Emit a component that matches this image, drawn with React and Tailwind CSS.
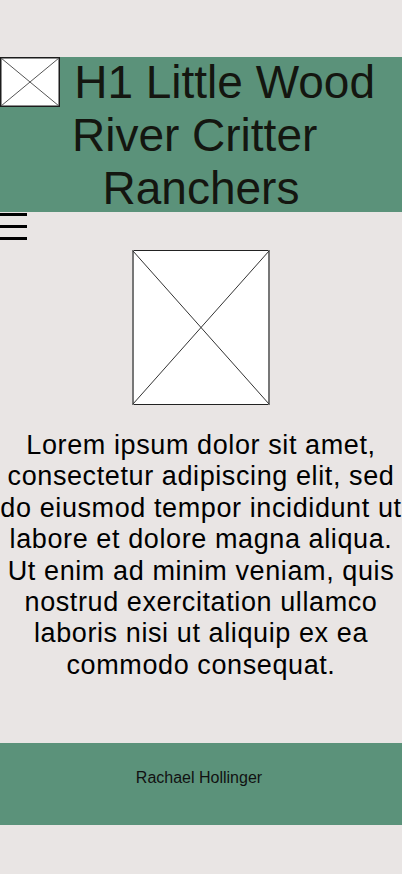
export default function App() {
  return (
    <div className="min-h-[874px] bg-[#e9e5e4] text-black" style={{ fontFamily: '"Liberation Sans", Arial, sans-serif' }}>
      <div className="h-[57px]" />
      <header className="bg-[#5b927a] h-[155px] flow-root">
        <svg className="float-left block" width="60" height="50" viewBox="0 0 60 50">
          <rect x="0.75" y="0.75" width="58.5" height="48.5" fill="#fff" stroke="#1c1c1c" strokeWidth="1.5" />
          <line x1="1" y1="1" x2="59" y2="49" stroke="#555" strokeWidth="1" />
          <line x1="59" y1="1" x2="1" y2="49" stroke="#555" strokeWidth="1" />
        </svg>
        <h1 className="text-center text-[46px] leading-[53px] font-normal text-[#141610] -mt-[1px]">
          H1 Little Wood{"\u00a0"}<br />River Critter{"\u00a0"}<br />Ranchers
        </h1>
      </header>
      <nav className="h-[30px] pt-px flex flex-col gap-[9px]">
        <div className="w-[27px] h-[3px] bg-black" />
        <div className="w-[27px] h-[3px] bg-black" />
        <div className="w-[27px] h-[3px] bg-black" />
      </nav>
      <div className="flex justify-center pt-[8px]">
        <svg className="block" width="138" height="155" viewBox="0 0 138 155">
          <rect x="0" y="0" width="138" height="155" fill="#fff" />
          <line x1="1" y1="0.5" x2="137" y2="0.5" stroke="#222" strokeWidth="1" />
          <line x1="1" y1="154.5" x2="137" y2="154.5" stroke="#222" strokeWidth="1" />
          <line x1="1" y1="0" x2="1" y2="155" stroke="#777" strokeWidth="2" />
          <line x1="137" y1="0" x2="137" y2="155" stroke="#777" strokeWidth="2" />
          <line x1="1" y1="1" x2="137" y2="154" stroke="#333" strokeWidth="1" />
          <line x1="137" y1="1" x2="1" y2="154" stroke="#333" strokeWidth="1" />
        </svg>
      </div>
      <p className="text-center text-[27px] tracking-[0.6px] leading-[31.4px] mt-[25px] px-0">
        Lorem ipsum dolor sit amet, consectetur adipiscing elit, sed do eiusmod tempor incididunt ut labore et dolore magna aliqua. Ut enim ad minim veniam, quis nostrud exercitation ullamco laboris nisi ut aliquip ex ea commodo consequat.
      </p>
      <footer className="mt-[62px] bg-[#5b927a] h-[82px] flex justify-center pt-[26px]">
        <span className="text-[16px] leading-[18px] text-[#111] pr-[4px]">Rachael Hollinger</span>
      </footer>
    </div>
  );
}
